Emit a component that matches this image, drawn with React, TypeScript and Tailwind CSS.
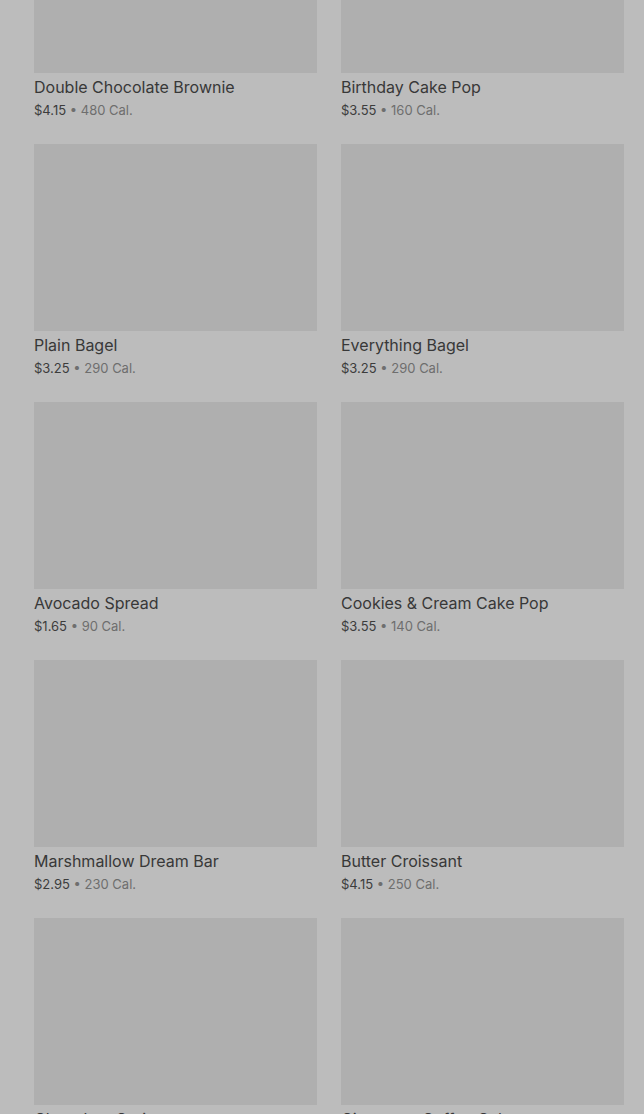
const items = [
  { name: "Double Chocolate Brownie", price: "$4.15", cal: "480 Cal." },
  { name: "Birthday Cake Pop", price: "$3.55", cal: "160 Cal." },
  { name: "Plain Bagel", price: "$3.25", cal: "290 Cal." },
  { name: "Everything Bagel", price: "$3.25", cal: "290 Cal." },
  { name: "Avocado Spread", price: "$1.65", cal: "90 Cal." },
  { name: "Cookies & Cream Cake Pop", price: "$3.55", cal: "140 Cal." },
  { name: "Marshmallow Dream Bar", price: "$2.95", cal: "230 Cal." },
  { name: "Butter Croissant", price: "$4.15", cal: "250 Cal." },
  { name: "Chocolate Croissant", price: "$3.95", cal: "340 Cal." },
  { name: "Cinnamon Coffee Cake", price: "$3.75", cal: "380 Cal." },
];

export default function App() {
  return (
    <div
      className="h-[1114px] overflow-hidden bg-[#bcbcbc]"
      style={{ fontFamily: "Inter, 'Noto Sans', sans-serif" }}
    >
      <div className="-mt-[114px] grid grid-cols-2 gap-x-6 gap-y-6 pl-[34px] pr-5">
        {items.map((item) => (
          <div key={item.name}>
            <div className="h-[187px] bg-[#afafaf]" />
            <p className="mt-[2px] text-[16px] leading-6 text-[#383838]">{item.name}</p>
            <p className="mt-px text-[13px] leading-5 text-[#6e6e6e]">
              <span className="text-[#3c3c3c]">{item.price}</span> • {item.cal}
            </p>
          </div>
        ))}
      </div>
    </div>
  );
}
